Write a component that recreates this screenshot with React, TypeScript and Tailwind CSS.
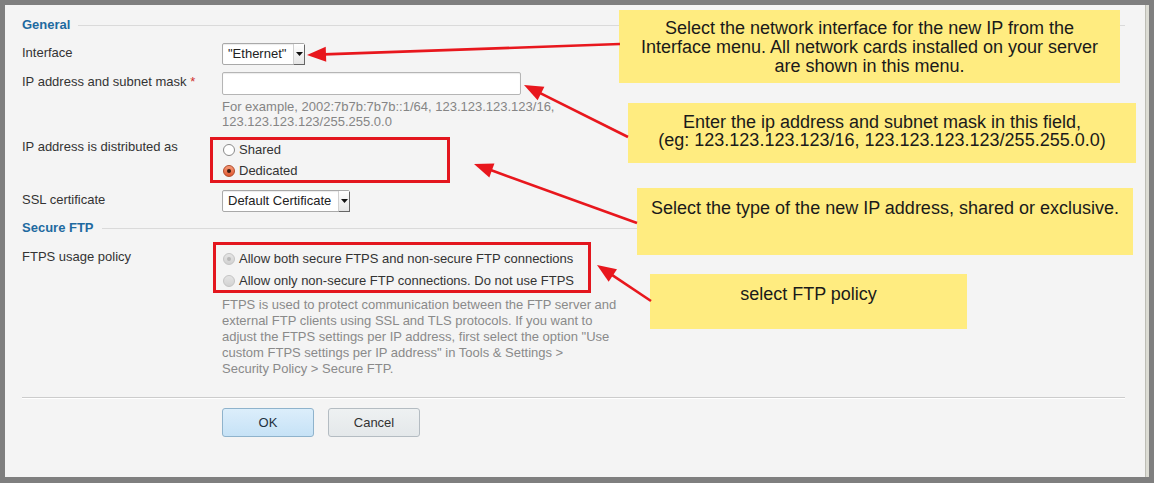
import React from "react";

const font = { fontFamily: '"Liberation Sans", Arial, sans-serif' };

function Arrow({ x1, y1, x2, y2 }: { x1: number; y1: number; x2: number; y2: number }) {
  const dx = x2 - x1;
  const dy = y2 - y1;
  const len = Math.sqrt(dx * dx + dy * dy);
  const ux = dx / len;
  const uy = dy / len;
  const hl = 19;
  const hw = 7.5;
  const bx = x2 - ux * hl;
  const by = y2 - uy * hl;
  const px = -uy;
  const py = ux;
  const pts = `${x2},${y2} ${bx + px * hw},${by + py * hw} ${bx - px * hw},${by - py * hw}`;
  return (
    <g>
      <line x1={x1} y1={y1} x2={bx + ux * 2} y2={by + uy * 2} stroke="#e8171d" strokeWidth={2.6} />
      <polygon points={pts} fill="#e8171d" />
    </g>
  );
}

function Select({ label, width }: { label: string; width: number }) {
  return (
    <div
      className="flex h-[22px] items-stretch rounded-[2px] border border-[#a9a9a9] bg-white shadow-[inset_0_1px_1px_rgba(0,0,0,0.08)]"
      style={{ width }}
    >
      <div className="flex flex-1 items-center pl-[5px] text-[13px] text-[#222]">{label}</div>
      <div className="flex w-[11px] items-center justify-center border-l border-[#d0d0d0] bg-gradient-to-b from-[#ffffff] to-[#e6e6e6] shadow-[1px_1px_0_#666]">
        <svg width="7" height="4" viewBox="0 0 7 4">
          <polygon points="0,0 7,0 3.5,4" fill="#111" />
        </svg>
      </div>
    </div>
  );
}

function Radio({ kind }: { kind: "off" | "on" | "disabledOn" | "disabledOff" }) {
  if (kind === "on") {
    return (
      <span className="flex h-[12px] w-[12px] items-center justify-center rounded-full border border-[#b0492a] bg-gradient-to-b from-[#f59a77] to-[#e0562e]">
        <span className="h-[4px] w-[4px] rounded-full bg-[#3a1a10]" />
      </span>
    );
  }
  if (kind === "off") {
    return <span className="h-[12px] w-[12px] rounded-full border border-[#8a8a8a] bg-white" />;
  }
  return (
    <span className="flex h-[12px] w-[12px] items-center justify-center rounded-full border border-[#c4c4c4] bg-gradient-to-b from-[#e4e4e4] to-[#d2d2d2]">
      {kind === "disabledOn" && <span className="h-[4px] w-[4px] rounded-full bg-[#b8b8b8]" />}
    </span>
  );
}

function Heading({ text }: { text: string }) {
  return (
    <div className="flex h-[16px] items-center">
      <span className="text-[13px] font-bold leading-[16px] text-[#1e6aa0]">{text}</span>
      <div className="ml-[8px] h-px flex-1 bg-[#dadada]" />
    </div>
  );
}

export default function App() {
  return (
    <div className="w-[1154px] h-[483px] bg-[#7f7f7f] pt-[5px] pl-[5px] pr-[5px] pb-[6px]" style={font}>
      <div className="relative flex h-[472px] w-[1144px] bg-[#f4f4f4]">
        <div className="flex w-[1140px] flex-col pl-[17px] pr-[20px] pt-[12px]">
          <Heading text="General" />

          <div className="mt-[10px] flex">
            <div className="w-[200px] pt-[1px] text-[13px] leading-[18px] text-[#333]">Interface</div>
            <Select label={'"Ethernet"'} width={83} />
          </div>

          <div className="mt-[7px] flex">
            <div className="w-[200px] pt-[1px] text-[13px] leading-[18px] text-[#333]">
              IP address and subnet mask <span className="text-[#d0312d]">*</span>
            </div>
            <div className="h-[23px] w-[299px] rounded-[2px] border border-[#b5b5b5] bg-white shadow-[inset_0_1px_1px_rgba(0,0,0,0.08)]" />
          </div>
          <div className="ml-[200px] mt-[4px] w-[360px] text-[13px] leading-[15px] text-[#858585]">
            For example, 2002:7b7b:7b7b::1/64, 123.123.123.123/16,
            <br />
            123.123.123.123/255.255.0.0
          </div>

          <div className="mt-[10px] flex">
            <div className="w-[200px] text-[13px] leading-[16px] text-[#333]">IP address is distributed as</div>
            <div className="flex flex-col">
              <div className="flex h-[21px] items-center gap-[4px] pl-[1px] text-[13px] text-[#333]">
                <Radio kind="off" />
                <span>Shared</span>
              </div>
              <div className="flex h-[21px] items-center gap-[4px] pl-[1px] text-[13px] text-[#333]">
                <Radio kind="on" />
                <span>Dedicated</span>
              </div>
            </div>
          </div>

          <div className="mt-[9px] flex">
            <div className="w-[200px] pt-[1px] text-[13px] leading-[18px] text-[#333]">SSL certificate</div>
            <Select label="Default Certificate" width={128} />
          </div>

          <div className="mt-[8px]">
            <Heading text="Secure FTP" />
          </div>

          <div className="mt-[12px] flex">
            <div className="w-[200px] pt-[1px] text-[13px] leading-[16px] text-[#333]">FTPS usage policy</div>
            <div className="flex flex-col">
              <div className="flex h-[22px] items-center gap-[4px] pl-[1px] text-[13px] text-[#333]">
                <Radio kind="disabledOn" />
                <span>Allow both secure FTPS and non-secure FTP connections</span>
              </div>
              <div className="flex h-[22px] items-center gap-[4px] pl-[1px] text-[13px] text-[#333]">
                <Radio kind="disabledOff" />
                <span>Allow only non-secure FTP connections. Do not use FTPS</span>
              </div>
            </div>
          </div>
          <p className="ml-[200px] mt-[5px] w-[404px] text-[13px] leading-[16px] text-[#8a8a8a]">
            FTPS is used to protect communication between the FTP server and external FTP clients using SSL and TLS
            protocols. If you want to adjust the FTPS settings per IP address, first select the option "Use custom FTPS
            settings per IP address" in Tools &amp; Settings &gt;
            <br />
            Security Policy &gt; Secure FTP.
          </p>

          <div className="mt-[20px] h-px bg-[#cccccc]" />
          <div className="h-px bg-white" />

          <div className="ml-[200px] mt-[9px] flex gap-[14px]">
            <button className="h-[29px] w-[92px] rounded-[3px] border border-[#8fb3cc] bg-gradient-to-b from-[#dceefb] to-[#c6e2f6] text-[13px] text-[#1f3140]">
              OK
            </button>
            <button className="h-[29px] w-[92px] rounded-[3px] border border-[#b4bcc2] bg-gradient-to-b from-[#eef1f2] to-[#e4e8ea] text-[13px] text-[#333]">
              Cancel
            </button>
          </div>
        </div>
        <div className="ml-auto w-[4px] border-l border-[#bdbdb5] bg-[#dcdcd4]" />

        {/* annotation boxes */}
        <div className="pointer-events-none absolute left-[205px] top-[132px] h-[46px] w-[240px] border-[3px] border-[#e3161e]" />
        <div className="pointer-events-none absolute left-[208px] top-[237px] h-[51px] w-[378px] border-[3px] border-[#e3161e]" />

        {/* callouts */}
        <div className="absolute left-[614px] top-[5px] flex h-[73px] w-[501px] items-start justify-center bg-[#ffec80] pt-[9px] text-center text-[18px] leading-[19px] text-[#1a1a1a]">
          <div>
            Select the network interface for the new IP from the
            <br />
            Interface menu. All network cards installed on your server
            <br />
            are shown in this menu.
          </div>
        </div>
        <div className="absolute left-[623px] top-[98px] flex h-[60px] w-[508px] items-start justify-center bg-[#ffec80] pt-[10px] text-center text-[18px] leading-[18px] text-[#1a1a1a]">
          <div>
            Enter the ip address and subnet mask in this field,
            <br />
            (eg: 123.123.123.123/16, 123.123.123.123/255.255.0.0)
          </div>
        </div>
        <div className="absolute left-[632px] top-[183px] flex h-[67px] w-[496px] items-start justify-center bg-[#ffec80] pt-[11px] text-center text-[18px] leading-[18px] text-[#1a1a1a]">
          Select the type of the new IP address, shared or exclusive.
        </div>
        <div className="absolute left-[645px] top-[269px] flex h-[55px] w-[317px] items-start justify-center bg-[#ffec80] pt-[11px] text-center text-[18px] leading-[18px] text-[#1a1a1a]">
          select FTP policy
        </div>

        <svg className="pointer-events-none absolute left-[-5px] top-[-5px]" width="1154" height="483">
          <Arrow x1={620} y1={44} x2={307} y2={55} />
          <Arrow x1={628} y1={137} x2={524} y2={85} />
          <Arrow x1={637} y1={223} x2={474} y2={164} />
          <Arrow x1={651} y1={301} x2={597} y2={265} />
        </svg>
      </div>
    </div>
  );
}
